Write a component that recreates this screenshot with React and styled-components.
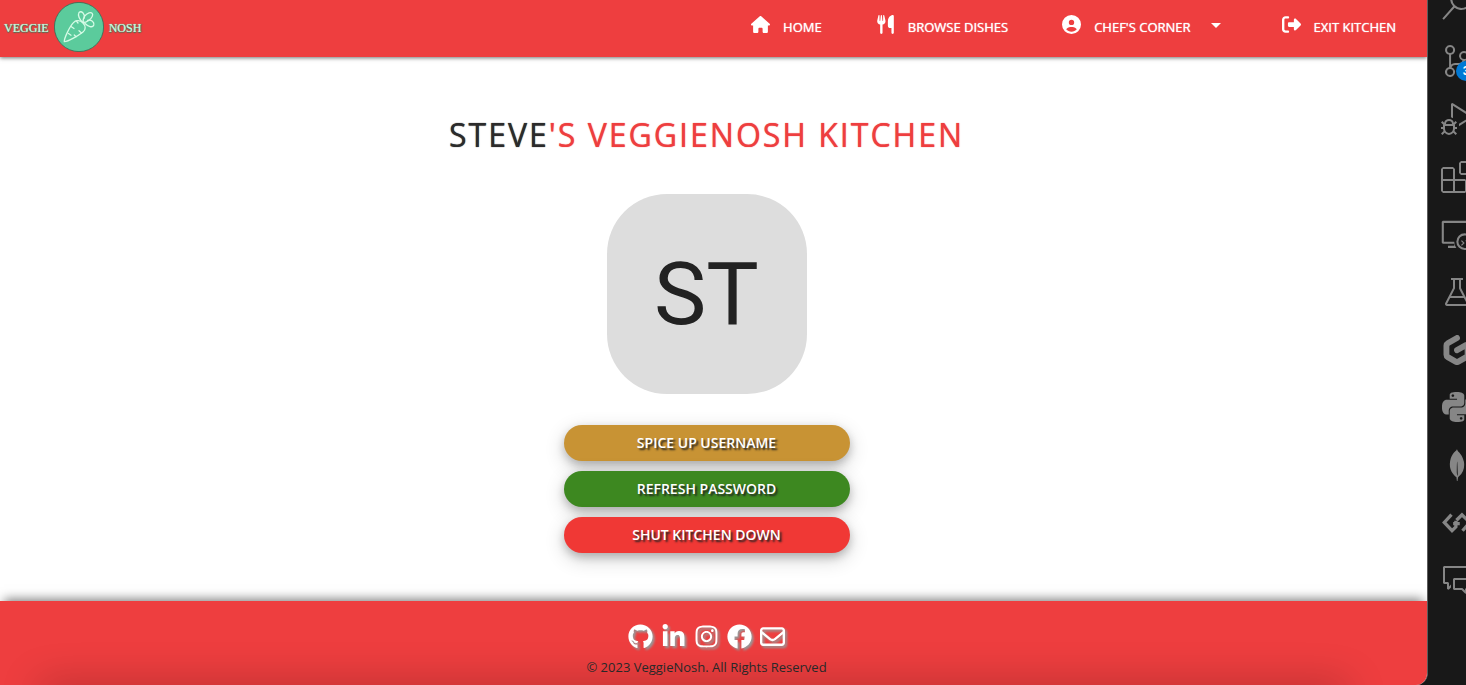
import React from "react";
import styled, { createGlobalStyle } from "styled-components";
import {
  FaHouse,
  FaUtensils,
  FaCircleUser,
  FaRightFromBracket,
  FaGithub,
  FaLinkedinIn,
  FaInstagram,
  FaRegEnvelope,
} from "react-icons/fa6";
import { FaFacebook } from "react-icons/fa";
import { MdArrowDropDown } from "react-icons/md";
import {
  VscSearch,
  VscSourceControl,
  VscDebugAlt,
  VscExtensions,
  VscRemoteExplorer,
  VscBeaker,
  VscCommentDiscussion,
} from "react-icons/vsc";
import { SiGitpod, SiPython, SiMongodb } from "react-icons/si";

const GlobalStyle = createGlobalStyle`
  *, *::before, *::after { box-sizing: border-box; }
  body {
    margin: 0;
    background: #181818;
    font-family: "Open Sans", "Noto Sans", sans-serif;
  }
`;

const Desktop = styled.div`
  display: grid;
  grid-template-columns: minmax(0, 1fr) 38px;
  min-height: 100vh;
`;

const Page = styled.div`
  display: flex;
  flex-direction: column;
  overflow: hidden;
  background: #fff;
  border-right: 1px solid #5c5c5c;
  border-bottom-right-radius: 12px;
`;

const Header = styled.header`
  display: flex;
  justify-content: space-between;
  align-items: center;
  height: 57px;
  padding: 0 31px 4px 4px;
  background: #ee3e3f;
  box-shadow: 0 1px 4px rgba(0, 0, 0, 0.55);
`;

const Brand = styled.a`
  display: flex;
  align-items: center;
  gap: 5px;
  color: #c9f7dc;
  font-family: "Liberation Serif", serif;
  font-size: 12px;
  line-height: 16px;
  text-decoration: none;
  text-shadow: 0 0 1px #c9f7dc, 0 1px 1px #1d6b4c, 1px 0 1px #1d6b4c;

  span {
    padding-top: 3px;
  }

  svg {
    width: 50px;
    height: 50px;
  }
`;

const NavList = styled.nav`
  display: flex;
  align-items: center;
  gap: 54px;
  margin-bottom: 4px;
`;

const NavLink = styled.a`
  display: flex;
  align-items: center;
  gap: 13px;
  padding: 0;
  border: 0;
  background: none;
  color: #fff;
  font-family: "Open Sans", "Noto Sans", sans-serif;
  font-size: 13px;
  font-weight: 500;
  line-height: 20px;
  text-decoration: none;
  text-shadow: 0 0 1px #fff;
  text-transform: uppercase;

  > svg {
    flex: none;
    height: 19px;
    width: auto;
  }

  > span {
    padding-top: 4px;
  }

  > svg.caret {
    width: 24px;
    height: 24px;
  }
`;

const Main = styled.main`
  display: flex;
  flex: 1;
  flex-direction: column;
  align-items: center;
  padding: 54px 14px 48px 0;
`;

const Title = styled.h1`
  margin: 0 0 35px;
  color: #ee3e3f;
  font-size: 32px;
  font-weight: 400;
  line-height: 48px;
  letter-spacing: 2px;
  text-shadow: 0 0 1px currentColor;
  text-transform: uppercase;

  span {
    color: #2b2b2b;
    text-shadow: 0 0 1px currentColor;
  }
`;

const Avatar = styled.div`
  display: grid;
  place-items: center;
  width: 200px;
  height: 200px;
  margin-bottom: 31px;
  border-radius: 60px;
  background: #ddd;
  color: #222;
  font-family: Roboto, "Liberation Sans", sans-serif;
  font-size: 88px;
  line-height: 100px;
`;

const Actions = styled.div`
  display: flex;
  flex-direction: column;
  gap: 10px;
  width: 286px;
`;

const tones = { amber: "#c89334", green: "#3d8820", red: "#f03835" };

const ActionButton = styled.button`
  height: 36px;
  padding: 0 16px;
  border: 0;
  border-radius: 18px;
  background: ${({ $tone }) => tones[$tone]};
  box-shadow: 0 4px 8px rgba(0, 0, 0, 0.2), 0 6px 20px rgba(0, 0, 0, 0.19);
  color: #fff;
  font-family: "Open Sans", "Noto Sans", sans-serif;
  font-size: 14px;
  font-weight: 600;
  line-height: 36px;
  text-shadow: 2px 2px 2px #222;
  text-transform: uppercase;
`;

const Footer = styled.footer`
  position: relative;
  display: flex;
  flex-direction: column;
  align-items: center;
  height: 84px;
  padding: 23px 14px 0 0;
  overflow: hidden;
  background: #ee3e3f;
  box-shadow: 0 -6px 10px -4px rgba(0, 0, 0, 0.5);

  &::after {
    content: "";
    position: absolute;
    top: 100%;
    left: 40px;
    right: 80px;
    height: 20px;
    box-shadow: 0 0 40px rgba(0, 0, 0, 0.3);
  }
`;

const Socials = styled.div`
  display: flex;
  align-items: center;
  gap: 8px;
  margin-bottom: 8px;

  a {
    display: flex;
    color: #fff;
  }

  svg {
    width: auto;
    height: 25px;
    filter: drop-shadow(2px 2px 1px #999);
  }
`;

const Copyright = styled.p`
  margin: 0;
  color: #2b2b2b;
  font-size: 13px;
  line-height: 20px;
`;

const ActivityBar = styled.aside`
  overflow: hidden;
  background: #181818;
`;

const ActivityList = styled.div`
  display: grid;
  grid-auto-rows: 1fr;
  width: 58px;
  height: 634px;
  margin-top: -25px;
`;

const ActivityItem = styled.button`
  position: relative;
  display: grid;
  place-items: center;
  padding: 0;
  border: 0;
  background: none;
  color: #868686;

  svg {
    width: ${({ $compact }) => ($compact ? 30 : 32)}px;
    height: ${({ $compact }) => ($compact ? 30 : 32)}px;
  }
`;

const Badge = styled.span`
  position: absolute;
  right: 10px;
  bottom: 9px;
  width: 20px;
  height: 20px;
  border-radius: 10px;
  background: #0078d4;
  color: #fff;
  font-family: "Liberation Sans", sans-serif;
  font-size: 12px;
  font-weight: 700;
  line-height: 20px;
  text-align: center;
`;

function CarrotLogo() {
  return (
    <svg viewBox="0 0 50 50" fill="none" aria-hidden="true">
      <circle cx="25" cy="25" r="24.6" fill="#5bcb9c" stroke="#2f6d55" strokeWidth="0.8" />
      <g stroke="#d6fbe6" strokeWidth="1.3" strokeLinecap="round" strokeLinejoin="round">
        <path d="M10.3 39.6C10 36.5 15.5 25 19.2 20.9C22 17.5 26.5 18.3 29 21C31.8 23.8 32 27.6 29 30C24.5 33.5 14.2 39.7 10.3 39.6Z" />
        <path d="M17 24.5L20 26.5M22.3 18.8L24 21M14.5 31.5L17 33.2M27.5 31L25 28.8M22 34.7L20.3 33" />
        <path d="M29 20.5C25.5 18 23.5 13 25 10.5C27.5 8.5 31 11.5 30.3 16" />
        <path d="M29 20.5C28.5 16 31.5 12 35 10.8C38 9.8 39.5 12 38.2 14.5C37 17 33 20.5 29 20.5Z" />
        <path d="M33.5 18.3C37.5 17.5 40.5 20 39.8 23C38.5 26.3 34 24.5 30.8 21.2" />
      </g>
    </svg>
  );
}

function CodeSwapIcon() {
  return (
    <svg viewBox="0 0 29 29" fill="none" stroke="currentColor" strokeWidth="3" aria-hidden="true">
      <path d="M9.5 7L3 14L10 21.5L13.5 18V12.5" />
      <path d="M19.5 21.5L26 14L19 7L14 12M11 15H17" />
    </svg>
  );
}

const activities = [
  { name: "Search", Icon: VscSearch },
  { name: "Source control", Icon: VscSourceControl, count: 3 },
  { name: "Run and debug", Icon: VscDebugAlt },
  { name: "Extensions", Icon: VscExtensions },
  { name: "Remote explorer", Icon: VscRemoteExplorer },
  { name: "Testing", Icon: VscBeaker },
  { name: "Gitpod", Icon: SiGitpod, compact: true },
  { name: "Python", Icon: SiPython, compact: true },
  { name: "MongoDB", Icon: SiMongodb },
  { name: "Code changes", Icon: CodeSwapIcon },
  { name: "Comments", Icon: VscCommentDiscussion },
];

const socials = [
  ["GitHub", FaGithub],
  ["LinkedIn", FaLinkedinIn],
  ["Instagram", FaInstagram],
  ["Facebook", FaFacebook],
  ["Email", FaRegEnvelope],
];

export default function App() {
  return (
    <>
      <GlobalStyle />
      <Desktop>
        <Page>
          <Header>
            <Brand href="#home">
              <span>VEGGIE</span>
              <CarrotLogo />
              <span>NOSH</span>
            </Brand>
            <NavList>
              <NavLink href="#home">
                <FaHouse />
                <span>Home</span>
              </NavLink>
              <NavLink href="#dishes">
                <FaUtensils />
                <span>Browse Dishes</span>
              </NavLink>
              <NavLink as="button" type="button" aria-haspopup="menu">
                <FaCircleUser />
                <span>Chef's Corner</span>
                <MdArrowDropDown className="caret" />
              </NavLink>
              <NavLink href="#exit">
                <FaRightFromBracket />
                <span>Exit Kitchen</span>
              </NavLink>
            </NavList>
          </Header>
          <Main>
            <Title>
              <span>Steve</span>'s VeggieNosh Kitchen
            </Title>
            <Avatar>ST</Avatar>
            <Actions>
              <ActionButton type="button" $tone="amber">Spice up username</ActionButton>
              <ActionButton type="button" $tone="green">Refresh password</ActionButton>
              <ActionButton type="button" $tone="red">Shut kitchen down</ActionButton>
            </Actions>
          </Main>
          <Footer>
            <Socials>
              {socials.map(([name, Icon]) => (
                <a key={name} href={`#${name.toLowerCase()}`} aria-label={name}>
                  <Icon />
                </a>
              ))}
            </Socials>
            <Copyright>© 2023 VeggieNosh. All Rights Reserved</Copyright>
          </Footer>
        </Page>
        <ActivityBar>
          <ActivityList>
            {activities.map(({ name, Icon, count, compact }) => (
              <ActivityItem key={name} type="button" aria-label={name} $compact={compact}>
                <Icon />
                {count && <Badge>{count}</Badge>}
              </ActivityItem>
            ))}
          </ActivityList>
        </ActivityBar>
      </Desktop>
    </>
  );
}
